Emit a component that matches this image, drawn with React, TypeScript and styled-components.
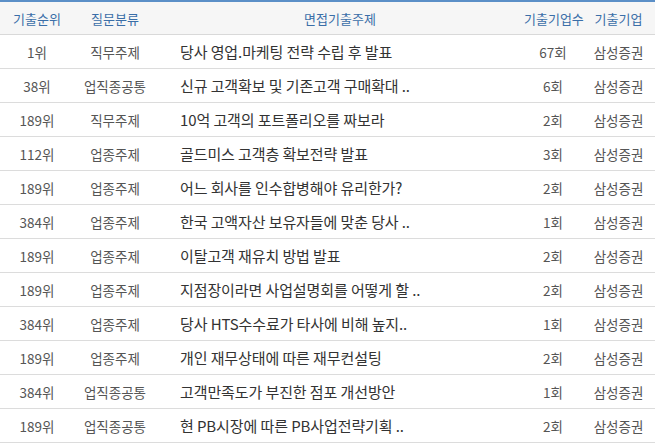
import React from "react";
import styled, { createGlobalStyle } from "styled-components";

const Global = createGlobalStyle`
  html, body { margin: 0; padding: 0; background: #fff; }
  body { font-family: "Noto Sans CJK KR", "Noto Sans", sans-serif; }
`;

const Table = styled.table`
  width: 655px;
  border-collapse: collapse;
  table-layout: fixed;
  font-size: 13.5px;
`;

const Head = styled.thead`
  background: #f6f6f6;
`;

const HeadRow = styled.tr`
  border-top: 2px solid #5b8fc7;
  border-bottom: 1px solid #d9d9d9;
`;

const Th = styled.th<{ $w: number }>`
  width: ${(p) => p.$w}px;
  height: 32px;
  padding: 0;
  font-size: 13px;
  font-weight: normal;
  color: #3a6ea8;
  text-align: center;
  white-space: nowrap;
`;

const Row = styled.tr`
  border-bottom: 1px solid #dcdcdc;
`;

const Td = styled.td`
  height: 33px;
  padding: 0;
  text-align: center;
  color: #555;
  white-space: nowrap;
  overflow: hidden;
`;

const Topic = styled(Td)`
  padding-left: 24px;
  text-align: left;
  font-size: 15px;
  letter-spacing: -0.1px;
  color: #333;
`;

const rows: [string, string, string, string][] = [
  ["1위", "직무주제", "당사 영업.마케팅 전략 수립 후 발표", "67회"],
  ["38위", "업직종공통", "신규 고객확보 및 기존고객 구매확대 ..", "6회"],
  ["189위", "직무주제", "10억 고객의 포트폴리오를 짜보라", "2회"],
  ["112위", "업종주제", "골드미스 고객층 확보전략 발표", "3회"],
  ["189위", "업종주제", "어느 회사를 인수합병해야 유리한가?", "2회"],
  ["384위", "업종주제", "한국 고액자산 보유자들에 맞춘 당사 ..", "1회"],
  ["189위", "업종주제", "이탈고객 재유치 방법 발표", "2회"],
  ["189위", "업종주제", "지점장이라면 사업설명회를 어떻게 할 ..", "2회"],
  ["384위", "업종주제", "당사 HTS수수료가 타사에 비해 높지..", "1회"],
  ["189위", "업종주제", "개인 재무상태에 따른 재무컨설팅", "2회"],
  ["384위", "업직종공통", "고객만족도가 부진한 점포 개선방안", "1회"],
  ["189위", "업직종공통", "현 PB시장에 따른 PB사업전략기획 ..", "2회"],
];

export default function App() {
  return (
    <>
      <Global />
      <Table>
        <Head>
          <HeadRow>
            <Th $w={74}>기출순위</Th>
            <Th $w={82}>질문분류</Th>
            <Th $w={368}>면접기출주제</Th>
            <Th $w={58}>기출기업수</Th>
            <Th $w={73}>기출기업</Th>
          </HeadRow>
        </Head>
        <tbody>
          {rows.map((r, i) => (
            <Row key={i}>
              <Td>{r[0]}</Td>
              <Td>{r[1]}</Td>
              <Topic>{r[2]}</Topic>
              <Td>{r[3]}</Td>
              <Td>삼성증권</Td>
            </Row>
          ))}
        </tbody>
      </Table>
    </>
  );
}
